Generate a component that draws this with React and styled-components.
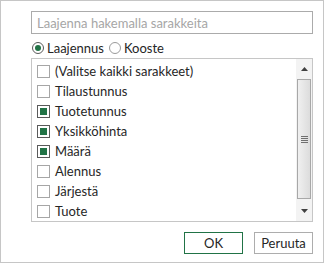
import React, { useState } from 'react';
import styled, { createGlobalStyle } from 'styled-components';

const GlobalStyle = createGlobalStyle`
  body {
    margin: 0;
    background: #ffffff;
    font-family: Lato, 'Open Sans', sans-serif;
  }
`;

const Frame = styled.div`
  width: 324px;
  height: 263px;
  box-sizing: border-box;
  border: 1px solid #c6c6c6;
  padding: 10px 10px 0 30px;
  display: flex;
  flex-direction: column;
  color: #262626;
  font-size: 13px;
`;

const SearchInput = styled.input`
  height: 23px;
  box-sizing: border-box;
  border: 1px solid #ababab;
  padding: 0 5px;
  font-family: inherit;
  font-size: 13px;
  outline: none;
  &::placeholder {
    color: #a6a6a6;
  }
`;

const RadioRow = styled.div`
  display: flex;
  align-items: center;
  height: 16px;
  margin-top: 6px;
  padding-left: 1px;
`;

const RadioLabel = styled.label`
  display: flex;
  align-items: center;
  gap: 3px;
  margin-right: 5px;
  cursor: pointer;
`;

const RadioDot = styled.span`
  width: 12px;
  height: 12px;
  box-sizing: border-box;
  border-radius: 50%;
  border: 1px solid ${(p) => (p.$on ? '#5a5a5a' : '#9a9a9a')};
  display: flex;
  align-items: center;
  justify-content: center;
  &::after {
    content: '';
    width: 6px;
    height: 6px;
    border-radius: 50%;
    background: ${(p) => (p.$on ? '#217346' : 'transparent')};
  }
`;

const ListBox = styled.div`
  margin-top: 2px;
  height: 164px;
  box-sizing: border-box;
  border: 1px solid #c6c6c6;
  display: flex;
`;

const Items = styled.div`
  flex: 1;
  padding-top: 2px;
  display: flex;
  flex-direction: column;
`;

const Row = styled.label`
  height: 20px;
  display: flex;
  align-items: center;
  padding-left: 5px;
  gap: 5px;
  cursor: pointer;
  white-space: nowrap;
`;

const Box = styled.span`
  width: 13px;
  height: 13px;
  box-sizing: border-box;
  border: 1px solid ${(p) => (p.$on ? '#5a5a5a' : '#a6a6a6')};
  display: flex;
  align-items: center;
  justify-content: center;
  flex-shrink: 0;
  &::after {
    content: '';
    width: 7px;
    height: 7px;
    background: ${(p) => (p.$on ? '#217346' : 'transparent')};
  }
`;

const ScrollTrack = styled.div`
  width: 16px;
  background: #f3f3f3;
  display: flex;
  flex-direction: column;
  align-items: center;
`;

const Arrow = styled.div`
  height: 20px;
  width: 100%;
  display: flex;
  align-items: center;
  justify-content: center;
`;

const Thumb = styled.div`
  width: 14px;
  flex: 1;
  margin: 0 0 2px;
  box-sizing: border-box;
  border: 1px solid #a8a8a8;
  background: linear-gradient(to right, #f0f0f0, #dcdcdc);
  display: flex;
  align-items: center;
  justify-content: center;
`;

const Grip = styled.div`
  width: 7px;
  height: 7px;
  background: repeating-linear-gradient(
    to bottom,
    #6f6f6f 0,
    #6f6f6f 1px,
    transparent 1px,
    transparent 2px
  );
`;

const ButtonRow = styled.div`
  display: flex;
  justify-content: flex-end;
  gap: 11px;
  margin-top: 10px;
`;

const Button = styled.button`
  width: 59px;
  height: 22px;
  box-sizing: border-box;
  background: #ffffff;
  border: 1px solid ${(p) => (p.$primary ? '#217346' : '#adadad')};
  font-family: inherit;
  font-size: 13px;
  color: #262626;
  padding: 0;
`;

const columns = [
  { name: '(Valitse kaikki sarakkeet)', on: false },
  { name: 'Tilaustunnus', on: false },
  { name: 'Tuotetunnus', on: true },
  { name: 'Yksikköhinta', on: true },
  { name: 'Määrä', on: true },
  { name: 'Alennus', on: false },
  { name: 'Järjestä', on: false },
  { name: 'Tuote', on: false }
];

export default function App() {
  const [mode, setMode] = useState('expand');

  return (
    <>
      <GlobalStyle />
      <Frame>
        <SearchInput placeholder="Laajenna hakemalla sarakkeita" />
        <RadioRow>
          <RadioLabel onClick={() => setMode('expand')}>
            <RadioDot $on={mode === 'expand'} />
            Laajennus
          </RadioLabel>
          <RadioLabel onClick={() => setMode('aggregate')}>
            <RadioDot $on={mode === 'aggregate'} />
            Kooste
          </RadioLabel>
        </RadioRow>
        <ListBox>
          <Items>
            {columns.map((c) => (
              <Row key={c.name}>
                <Box $on={c.on} />
                {c.name}
              </Row>
            ))}
          </Items>
          <ScrollTrack>
            <Arrow>
              <svg width="7" height="4" viewBox="0 0 7 4">
                <path d="M0 4 L3.5 0 L7 4 Z" fill="#404040" />
              </svg>
            </Arrow>
            <Thumb>
              <Grip />
            </Thumb>
            <Arrow>
              <svg width="7" height="4" viewBox="0 0 7 4">
                <path d="M0 0 L3.5 4 L7 0 Z" fill="#404040" />
              </svg>
            </Arrow>
          </ScrollTrack>
        </ListBox>
        <ButtonRow>
          <Button $primary>OK</Button>
          <Button>Peruuta</Button>
        </ButtonRow>
      </Frame>
    </>
  );
}
